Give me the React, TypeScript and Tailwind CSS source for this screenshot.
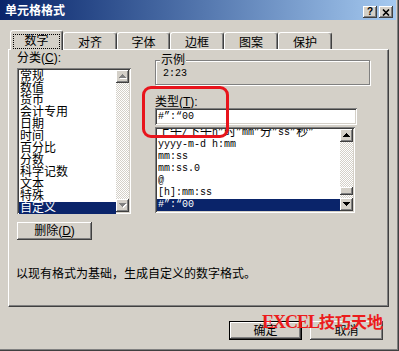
import type { ReactNode } from 'react'

const raised = 'shadow-[inset_-1px_-1px_#404040,inset_1px_1px_#ffffff,inset_-2px_-2px_#808080]'
const sunken = 'shadow-[inset_1px_1px_#808080,inset_-1px_-1px_#ffffff,inset_2px_2px_#404040,inset_-2px_-2px_#d4d0c8]'
const checker = 'bg-[image:repeating-conic-gradient(#d4d0c8_0%_25%,#ffffff_0%_50%)] bg-[size:2px_2px]'
const mono = "font-['Liberation_Mono','Noto_Sans_CJK_SC',monospace] text-[10px]"

const categories = ['常规', '数值', '货币', '会计专用', '日期', '时间', '百分比', '分数', '科学记数', '文本', '特殊', '自定义']
const formats = ['yyyy-m-d h:mm', 'mm:ss', 'mm:ss.0', '@', '[h]:mm:ss']
const tabs = [
  { label: '对齐', w: 'w-[54px]' },
  { label: '字体', w: 'w-[53px]' },
  { label: '边框', w: 'w-[54px]' },
  { label: '图案', w: 'w-[54px]' },
  { label: '保护', w: 'w-[54px]' },
]

function Arrow({ up, disabled }: { up?: boolean; disabled?: boolean }) {
  const rows = [0, 1, 2, 3].map((i) => (up ? { y: i, x: 3 - i, w: 1 + i * 2 } : { y: i, x: i, w: 7 - i * 2 }))
  return (
    <div className={`flex h-[13px] shrink-0 items-center justify-center bg-[#d4d0c8] ${raised}`}>
      <svg width="8" height="5" viewBox="0 0 8 5" shapeRendering="crispEdges">
        {disabled && rows.map((r) => <rect key={'s' + r.y} x={r.x + 1} y={r.y + 1} width={r.w} height={1} fill="#ffffff" />)}
        {rows.map((r) => (
          <rect key={r.y} x={r.x} y={r.y} width={r.w} height={1} fill={disabled ? '#808080' : '#000000'} />
        ))}
      </svg>
    </div>
  )
}

function ScrollBar({ disabled, thumb }: { disabled?: boolean; thumb?: boolean }) {
  return (
    <div className="flex w-[13px] shrink-0 flex-col">
      <Arrow up disabled={disabled} />
      <div className={`flex-1 ${checker}`} />
      {thumb && (
        <>
          <div className={`h-[8px] shrink-0 bg-[#d4d0c8] ${raised}`} />
          <div className={`h-[3px] shrink-0 ${checker}`} />
        </>
      )}
      <Arrow disabled={disabled} />
    </div>
  )
}

function Button({ children, primary }: { children: ReactNode; primary?: boolean }) {
  return (
    <div
      className={`flex h-[19px] w-[73px] items-center justify-center bg-[#d4d0c8] ${
        primary ? 'border border-black' : ''
      } ${raised}`}
    >
      {children}
    </div>
  )
}

export default function App() {
  return (
    <div className="relative flex h-[351px] w-[399px] flex-col overflow-hidden bg-[#d4d0c8] font-['Liberation_Sans','Noto_Sans_CJK_SC',sans-serif] text-[12px] leading-[12px] text-black shadow-[inset_-1px_-1px_#404040,inset_-2px_-2px_#808080]">
      {/* title bar */}
      <div className="mr-[3px] flex h-[20px] shrink-0 items-start justify-between bg-gradient-to-r from-[#0a246a] to-[#a6caf0] pl-[5px] pr-[3px]">
        <span className="mt-[5px] font-bold text-white">单元格格式</span>
        <div className="mt-[6px] flex gap-[2px]">
          <div className={`flex h-[12px] w-[14px] items-center justify-center bg-[#d4d0c8] text-[10px] font-bold leading-[10px] ${raised}`}>
            ?
          </div>
          <div className={`flex h-[12px] w-[14px] items-center justify-center bg-[#d4d0c8] ${raised}`}>
            <svg width="8" height="7" viewBox="0 0 8 7">
              <path d="M1 0.5 L7 6.5 M7 0.5 L1 6.5" stroke="#000" strokeWidth="1.6" />
            </svg>
          </div>
        </div>
      </div>

      {/* tabs */}
      <div className="relative z-10 mt-[10px] flex h-[19px] items-end pl-[10px]">
        <div className="-mb-px flex h-[20px] w-[53px] items-center justify-center rounded-t-[3px] border-l border-r border-t border-white border-r-[#404040] bg-[#d4d0c8] pt-[1px] shadow-[inset_-1px_0_#808080]">
          <span className="flex h-[15px] w-[47px] items-center justify-center border border-dotted border-black">数字</span>
        </div>
        {tabs.map((t) => (
          <div
            key={t.label}
            className={`flex h-[17px] ${t.w} items-center justify-center rounded-t-[3px] border-l border-r border-t border-white border-r-[#404040] pt-[3px] shadow-[inset_-1px_0_#808080]`}
          >
            {t.label}
          </div>
        ))}
      </div>

      {/* panel */}
      <div className="ml-[8px] flex h-[258px] w-[381px] shrink-0 flex-col border border-white border-b-[#404040] border-r-[#404040] shadow-[inset_-1px_-1px_#808080]">
        <div className="flex gap-[24px] pl-[8px]">
          {/* left column */}
          <div className="flex w-[114px] flex-col">
            <div className="mt-[2px]">
              分类(<span className="underline">C</span>):
            </div>
            <div className={`mt-[4px] flex h-[146px] bg-white p-[2px] ${sunken}`}>
              <div className="flex flex-1 flex-col">
                {categories.map((c, i) => (
                  <div
                    key={c}
                    className={`flex flex-1 items-center pl-[1px] ${i === categories.length - 1 ? 'bg-[#0a246a] text-white' : ''}`}
                  >
                    {c}
                  </div>
                ))}
              </div>
              <ScrollBar disabled />
            </div>
            <div className={`mt-[8px] flex h-[18px] w-[75px] items-center justify-center bg-[#d4d0c8] ${raised}`}>
              删除(<span className="underline">D</span>)
            </div>
          </div>

          {/* right column */}
          <div className="flex flex-col">
            <div className="relative mt-[10px] h-[25px] w-[215px] border border-[#808080] shadow-[inset_1px_1px_#ffffff,1px_1px_#ffffff]">
              <span className="absolute -top-[7px] left-[4px] bg-[#d4d0c8] px-[1px]">示例</span>
              <div className={`${mono} pl-[7px] pt-[8px] leading-[10px]`}>2:23</div>
            </div>
            <div className="mt-[11px]">
              类型(<span className="underline">T</span>):
            </div>
            <div className={`flex h-[17px] w-[202px] items-center bg-white px-[3px] ${sunken} ${mono}`}>#”:“00</div>
            <div className={`mt-[2px] flex h-[86px] w-[200px] bg-white p-[2px] ${sunken}`}>
              <div className={`flex flex-1 flex-col justify-end overflow-hidden ${mono}`}>
                <div className="flex h-[12px] shrink-0 items-center whitespace-nowrap pl-[1px]">
                  <span className="text-[12px]">上午</span>/<span className="text-[12px]">下午</span>h”
                  <span className="text-[12px]">时</span>”mm”<span className="text-[12px]">分</span>”ss”
                  <span className="text-[12px]">秒</span>”
                </div>
                {formats.map((f) => (
                  <div key={f} className="flex h-[12px] shrink-0 items-center whitespace-pre pl-[1px]">
                    {f}
                  </div>
                ))}
                <div className="flex h-[12px] shrink-0 items-center bg-[#0a246a] pl-[1px] text-white">#”:“00</div>
              </div>
              <ScrollBar thumb />
            </div>
          </div>
        </div>
        <div className="ml-[7px] mt-[28px]">以现有格式为基础，生成自定义的数字格式。</div>
      </div>

      {/* dialog buttons */}
      <div className="mt-[14px] flex justify-end gap-[8px] pr-[16px]">
        <Button primary>确定</Button>
        <Button>取消</Button>
      </div>

      {/* annotation */}
      <div className="pointer-events-none absolute left-[142px] top-[86px] h-[52px] w-[87px] rounded-[9px] border-[3px] border-[#e8141c]" />
      <div className="pointer-events-none absolute left-[262px] top-[315px] flex items-baseline font-bold text-[#ec1c1c]">
        <span className="font-['Liberation_Serif',serif] text-[18px] tracking-[-1px]">EXCEL</span>
        <span className="font-['Noto_Sans_CJK_SC',sans-serif] text-[16px]">技巧天地</span>
      </div>
    </div>
  )
}
